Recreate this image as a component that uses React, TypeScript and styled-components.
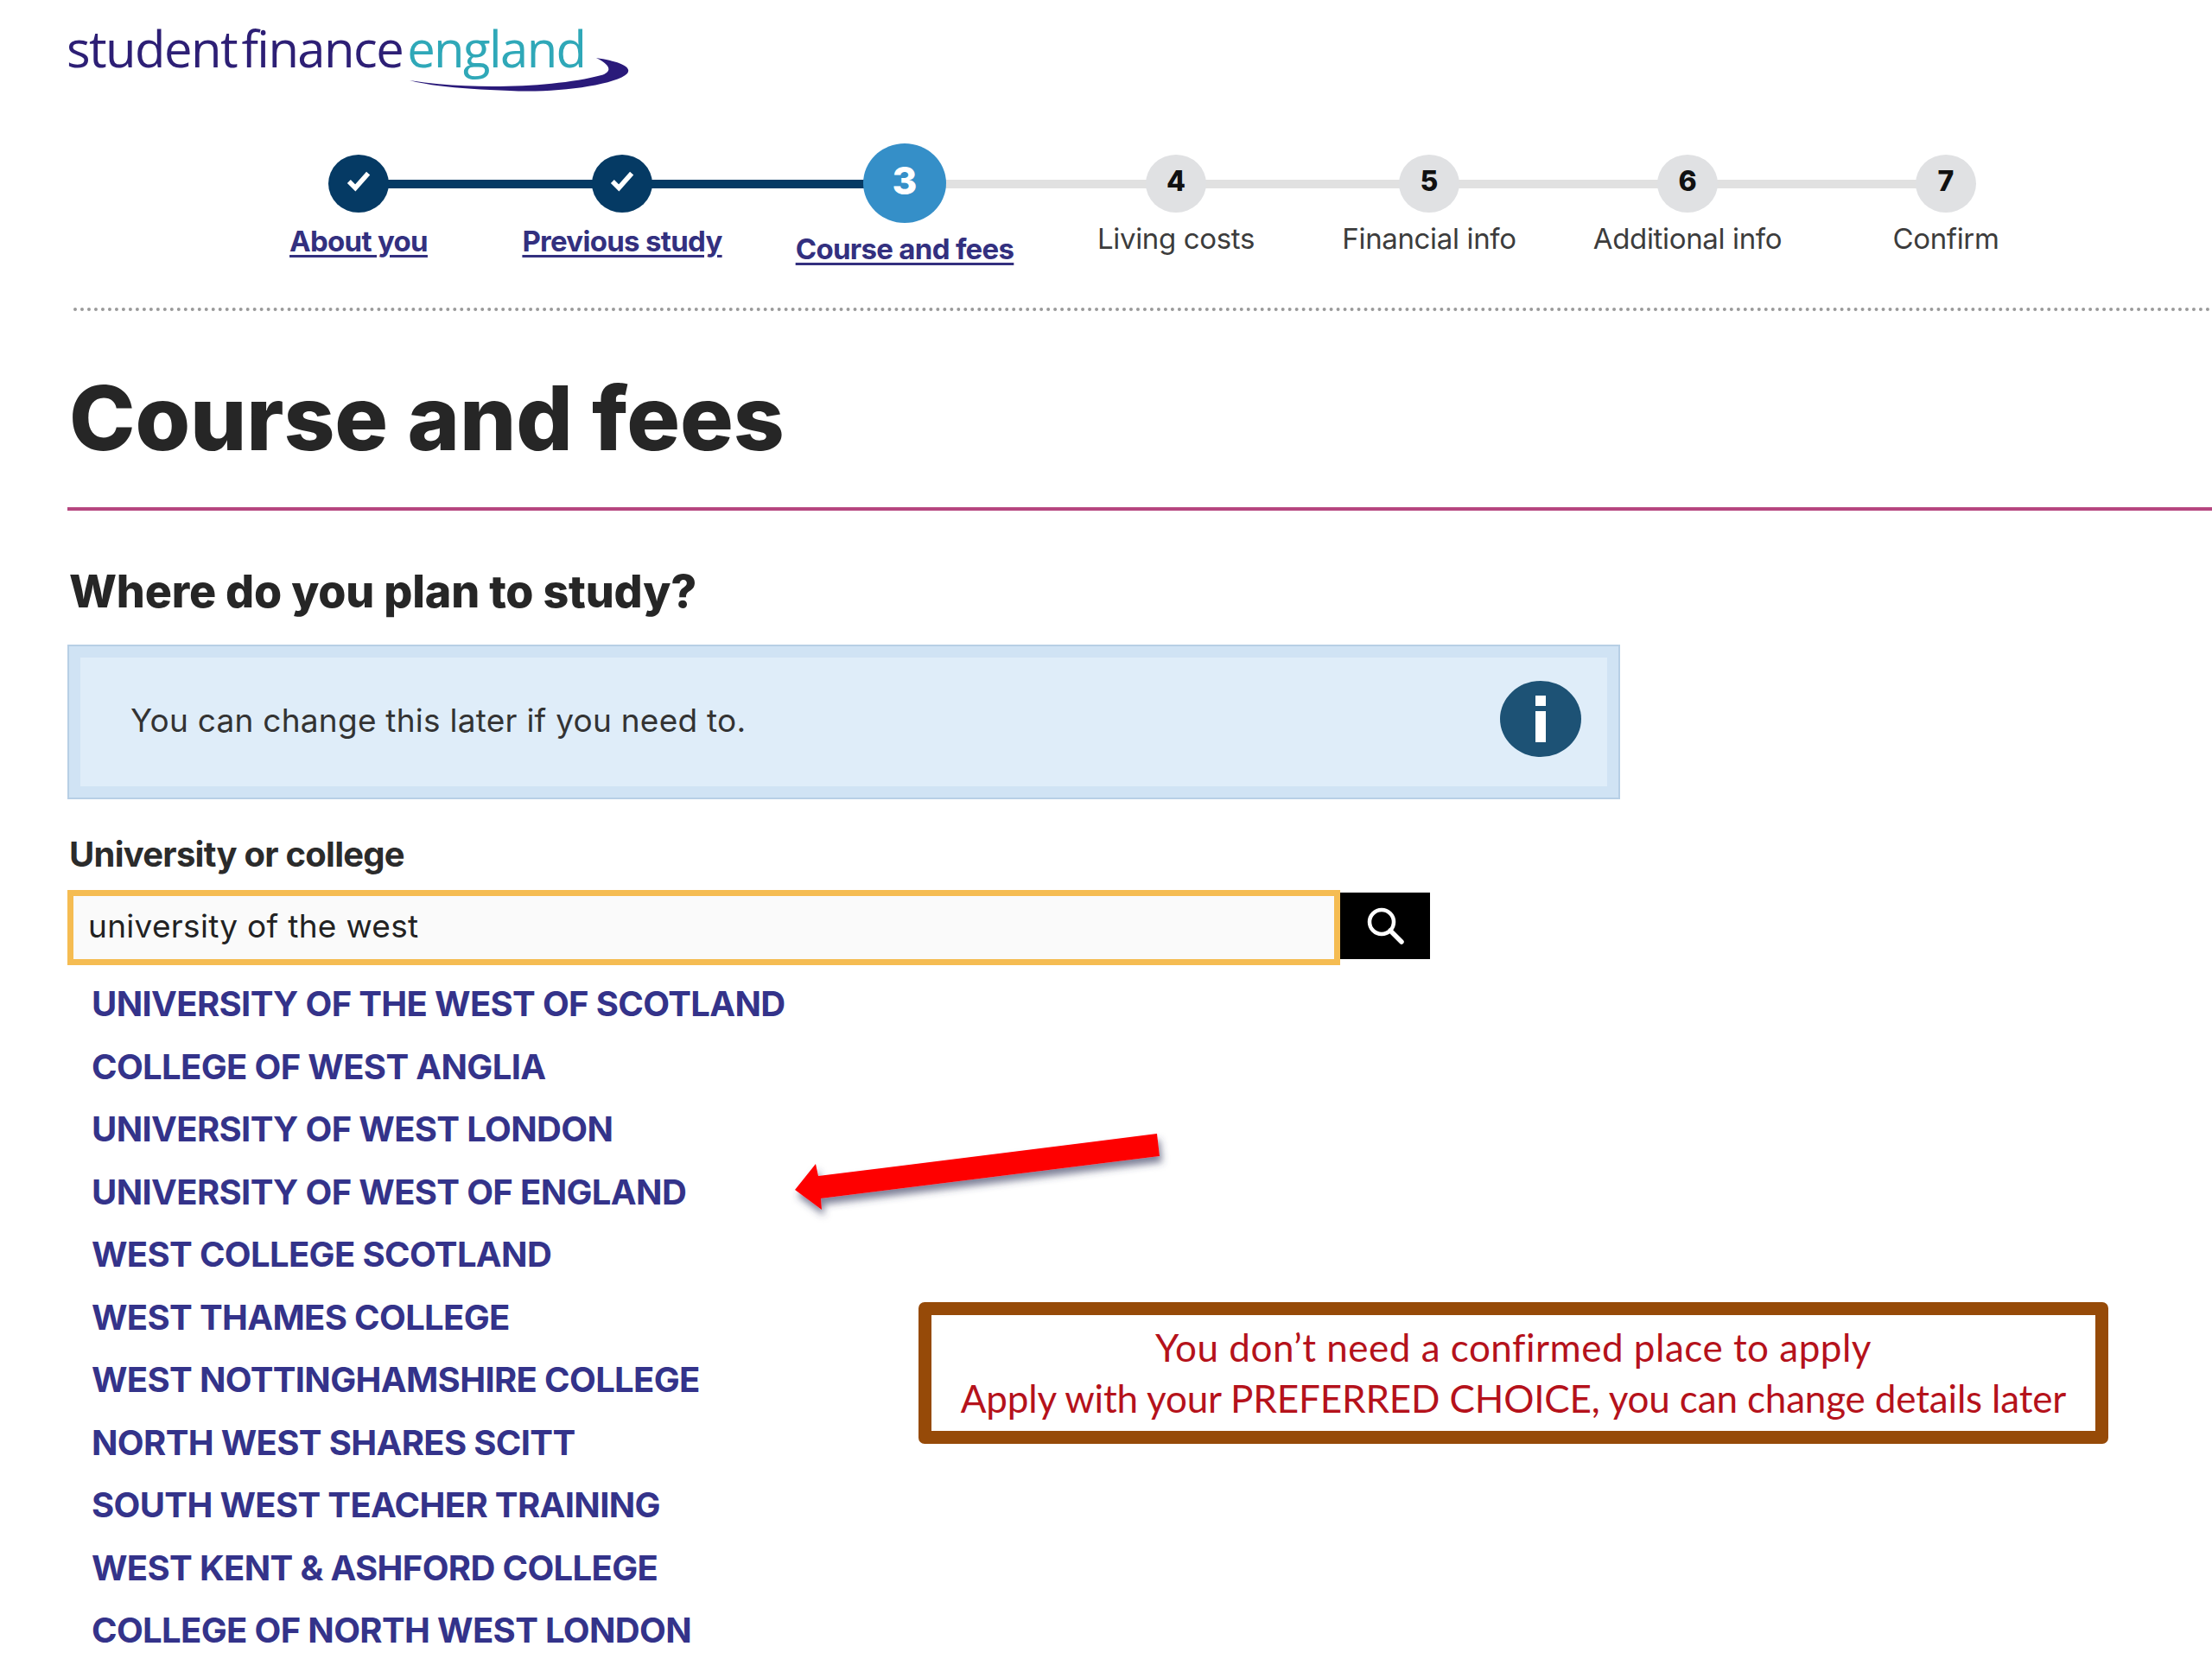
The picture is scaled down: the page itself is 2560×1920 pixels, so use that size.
import styled, { createGlobalStyle } from 'styled-components';

const GlobalStyle = createGlobalStyle`
  body {
    margin: 0;
    background: #ffffff;
    font-family: Inter, "Liberation Sans", sans-serif;
  }
`;

const Page = styled.div`
  position: relative;
  width: 2560px;
  height: 1920px;
  overflow: hidden;
  background: #fff;
`;

const LogoWrap = styled.div`
  position: relative;
  height: 60px;
  padding: 26px 0 0 77px;
  display: flex;
  gap: 5px;
  font-family: "Open Sans", sans-serif;
  font-size: 58px;
  line-height: 60px;
  letter-spacing: -1.6px;
  word-spacing: -8px;
`;

const LogoWord = styled.span<{ $color: string }>`
  color: ${(p) => p.$color};
  white-space: nowrap;
`;

const Swoosh = styled.svg`
  position: absolute;
  left: 0;
  top: 0;
`;

const Stepper = styled.ol`
  display: flex;
  margin: 0;
  padding: 0 0 0 263px;
  list-style: none;
  height: 270px;
  align-items: flex-start;
`;

const Step = styled.li<{ $width: number; $next?: number; $done?: boolean }>`
  position: relative;
  width: ${(p) => p.$width}px;
  display: flex;
  flex-direction: column;
  align-items: center;
  padding-top: 80px;

  &::after {
    content: '';
    display: ${(p) => (p.$next ? 'block' : 'none')};
    position: absolute;
    left: 50%;
    top: 122px;
    width: ${(p) => p.$next}px;
    height: 10px;
    background: ${(p) => (p.$done ? '#053a64' : '#e1e1e1')};
  }
`;

const CircleSlot = styled.div`
  position: relative;
  z-index: 1;
  height: 92px;
  display: flex;
  align-items: center;
`;

const Circle = styled.div<{ $kind: 'done' | 'active' | 'todo' }>`
  width: ${(p) => (p.$kind === 'active' ? 96 : 70)}px;
  height: ${(p) => (p.$kind === 'active' ? 92 : 67)}px;
  border-radius: 50%;
  background: ${(p) => (p.$kind === 'done' ? '#053a64' : p.$kind === 'active' ? '#358fc8' : '#e0e1e3')};
  color: ${(p) => (p.$kind === 'active' ? '#fff' : '#111')};
  display: flex;
  align-items: center;
  justify-content: center;
  font-weight: 800;
  font-size: ${(p) => (p.$kind === 'active' ? 44 : 32)}px;
  padding-bottom: 6px;
  box-sizing: border-box;
`;

const StepLabel = styled.a<{ $link?: boolean; $low?: boolean }>`
  margin-top: ${(p) => (p.$low ? 10 : p.$link ? 1 : -2)}px;
  font-size: 33px;
  line-height: 40px;
  white-space: nowrap;
  font-weight: ${(p) => (p.$link ? 700 : 400)};
  letter-spacing: ${(p) => (p.$link ? '-0.7px' : '-0.35px')};
  color: ${(p) => (p.$link ? '#33307f' : '#3c3c3c')};
  text-decoration: ${(p) => (p.$link ? 'underline' : 'none')};
  text-underline-offset: 4px;
`;

const Dotted = styled.div`
  margin-left: 85px;
  border-top: 4px dotted #9a9a9a;
`;

const Main = styled.main`
  padding-left: 78px;
`;

const Title = styled.h1`
  margin: 64px 0 0 2px;
  font-size: 103px;
  line-height: 120px;
  font-weight: 800;
  letter-spacing: -0.15px;
  color: #262626;
`;

const PinkRule = styled.div`
  margin-top: 43px;
  height: 4px;
  background: #b6467f;
`;

const Question = styled.h2`
  margin: 62px 0 0 2px;
  font-size: 52px;
  line-height: 64px;
  font-weight: 800;
  letter-spacing: -0.2px;
  color: #262626;
`;

const InfoBox = styled.div`
  box-sizing: border-box;
  margin-top: 29px;
  width: 1797px;
  height: 179px;
  padding: 0 43px 0 71px;
  display: flex;
  align-items: center;
  justify-content: space-between;
  border: 2px solid #b7cfe5;
  outline: 13px solid #d0e3f4;
  outline-offset: -15px;
  background: #dfedf9;
  font-size: 37px;
  letter-spacing: 0.25px;
  color: #333;
`;

const InfoText = styled.span`
  margin-top: -5px;
`;

const InfoIcon = styled.svg`
  flex: none;
  margin-top: -7px;
`;

const FieldLabel = styled.label`
  display: block;
  margin: 39px 0 0 2px;
  font-size: 40px;
  line-height: 50px;
  font-weight: 700;
  letter-spacing: -0.75px;
  color: #2b2b2b;
`;

const SearchRow = styled.div`
  margin-top: 16px;
  display: flex;
  align-items: flex-start;
`;

const SearchInput = styled.div`
  box-sizing: border-box;
  width: 1473px;
  height: 87px;
  padding: 0 0 4px 17px;
  display: flex;
  align-items: center;
  border: 7px solid #f5bc52;
  background: #fafafa;
  font-size: 37px;
  letter-spacing: 0.3px;
  color: #222;
`;

const SearchButton = styled.div`
  width: 104px;
  height: 77px;
  margin-top: 3px;
  background: #000;
  display: flex;
  align-items: center;
  justify-content: center;
`;

const Results = styled.ul`
  margin: 9px 0 0 28px;
  padding: 0;
  list-style: none;
`;

const Result = styled.li`
  height: 72.5px;
  font-size: 40px;
  line-height: 72.5px;
  font-weight: 700;
  letter-spacing: -0.65px;
  color: #34338a;
  white-space: nowrap;
`;

const Arrow = styled.svg`
  position: absolute;
  left: 900px;
  top: 1290px;
`;

const Callout = styled.div`
  position: absolute;
  left: 1063px;
  top: 1507px;
  box-sizing: border-box;
  width: 1377px;
  height: 164px;
  border: 15px solid #964a08;
  border-radius: 7px;
  background: #fff;
  display: flex;
  flex-direction: column;
  align-items: center;
  justify-content: center;
  font-family: Lato, sans-serif;
  font-size: 44px;
  line-height: 59px;
  color: #b5121b;
  white-space: nowrap;
`;

const CalloutLine = styled.span<{ $tracking: number }>`
  letter-spacing: ${(p) => p.$tracking}px;
`;

const steps = [
  { label: 'About you', width: 304, next: 305, kind: 'done' as const },
  { label: 'Previous study', width: 306, next: 327, kind: 'done' as const },
  { label: 'Course and fees', width: 348, next: 314, kind: 'active' as const, num: '3' },
  { label: 'Living costs', width: 280, next: 293, kind: 'todo' as const, num: '4' },
  { label: 'Financial info', width: 306, next: 299, kind: 'todo' as const, num: '5' },
  { label: 'Additional info', width: 292, next: 299, kind: 'todo' as const, num: '6' },
  { label: 'Confirm', width: 306, kind: 'todo' as const, num: '7' },
];

const results = [
  'UNIVERSITY OF THE WEST OF SCOTLAND',
  'COLLEGE OF WEST ANGLIA',
  'UNIVERSITY OF WEST LONDON',
  'UNIVERSITY OF WEST OF ENGLAND',
  'WEST COLLEGE SCOTLAND',
  'WEST THAMES COLLEGE',
  'WEST NOTTINGHAMSHIRE COLLEGE',
  'NORTH WEST SHARES SCITT',
  'SOUTH WEST TEACHER TRAINING',
  'WEST KENT & ASHFORD COLLEGE',
  'COLLEGE OF NORTH WEST LONDON',
];

export default function App() {
  return (
    <Page>
      <GlobalStyle />
      <LogoWrap>
        <LogoWord $color="#2d1f75">student finance</LogoWord>
        <LogoWord $color="#2fa8b8">england</LogoWord>
        <Swoosh width="760" height="120" viewBox="0 0 760 120">
          <path
            d="M474 93 C540 104 640 102 696 87 C708 83 708 76 690 67 C716 71 732 77 726 85 C712 99 640 108 590 105 C540 103 500 100 474 93 Z"
            fill="#2a1a7a"
          />
        </Swoosh>
      </LogoWrap>

      <Stepper>
        {steps.map((s) => (
          <Step key={s.label} $width={s.width} $next={s.next} $done={s.kind === 'done' || undefined}>
            <CircleSlot>
              <Circle $kind={s.kind}>
                {s.kind === 'done' ? (
                  <svg width="30" height="26" viewBox="0 0 32 28">
                    <path d="M4 15 L12 23 L28 5" fill="none" stroke="#fff" strokeWidth="6" />
                  </svg>
                ) : (
                  s.num
                )}
              </Circle>
            </CircleSlot>
            <StepLabel $link={s.kind !== 'todo'} $low={s.kind === 'active'}>
              {s.label}
            </StepLabel>
          </Step>
        ))}
      </Stepper>
      <Dotted />

      <Main>
        <Title>Course and fees</Title>
        <PinkRule />
        <Question>Where do you plan to study?</Question>
        <InfoBox>
          <InfoText>You can change this later if you need to.</InfoText>
          <InfoIcon width="94" height="88" viewBox="0 0 94 88">
            <ellipse cx="47" cy="44" rx="47" ry="44" fill="#1d5275" />
            <rect x="41" y="17" width="12" height="12" fill="#fff" />
            <rect x="41" y="35" width="12" height="36" fill="#fff" />
          </InfoIcon>
        </InfoBox>
        <FieldLabel>University or college</FieldLabel>
        <SearchRow>
          <SearchInput>university of the west</SearchInput>
          <SearchButton>
            <svg width="46" height="46" viewBox="0 0 46 46">
              <circle cx="19" cy="18" r="14" fill="none" stroke="#fff" strokeWidth="4.5" />
              <path d="M29 28 L42 41" stroke="#fff" strokeWidth="5.5" strokeLinecap="round" />
            </svg>
          </SearchButton>
        </SearchRow>
        <Results>
          {results.map((r) => (
            <Result key={r}>{r}</Result>
          ))}
        </Results>
      </Main>

      <Arrow width="460" height="130" viewBox="0 0 460 130">
        <defs>
          <filter id="arrow-shadow" x="-10%" y="-30%" width="120%" height="170%">
            <feDropShadow dx="3" dy="7" stdDeviation="4" floodColor="#3a4160" floodOpacity="0.65" />
          </filter>
        </defs>
        <polygon
          points="20,87 44,57 47,71 439,22 442,48 50,97 51,110"
          fill="#fe0000"
          filter="url(#arrow-shadow)"
        />
      </Arrow>

      <Callout>
        <CalloutLine $tracking={0.5}>You don’t need a confirmed place to apply</CalloutLine>
        <CalloutLine $tracking={-0.16}>Apply with your PREFERRED CHOICE, you can change details later</CalloutLine>
      </Callout>
    </Page>
  );
}
